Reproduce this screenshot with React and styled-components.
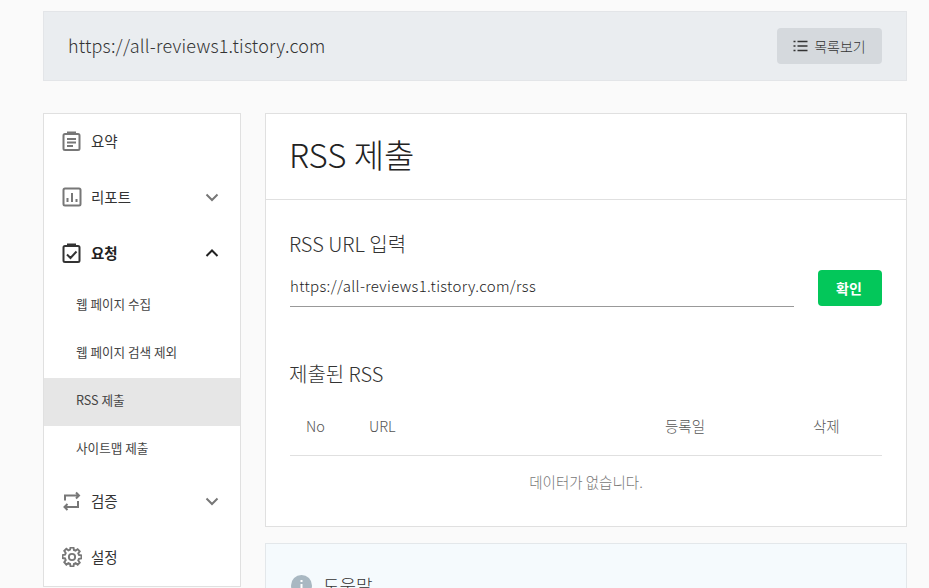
import React from "react";
import styled, { createGlobalStyle } from "styled-components";

const GlobalStyle = createGlobalStyle`
  html, body {
    margin: 0;
    height: 100%;
    overflow: hidden;
    background-color: #fafafa;
  }
  body {
    font-family: "Noto Sans CJK KR", "Noto Sans", sans-serif;
    color: #222;
  }
  * {
    box-sizing: border-box;
  }
`;

const Page = styled.div`
  width: 864px;
  margin-left: 43px;
  padding-top: 11px;
`;
const SiteBar = styled.div`
  display: flex;
  align-items: center;
  justify-content: space-between;
  height: 70px;
  padding: 0 24px;
  background-color: #eaedf0;
  border: 1px solid #e3e5e8;
`;
const SiteUrl = styled.div`
  font-size: 18px;
  font-weight: 300;
  color: #333;
  letter-spacing: 0.2px;
  margin-bottom: 3px;
`;
const ListButton = styled.button`
  display: flex;
  align-items: center;
  justify-content: center;
  gap: 6px;
  width: 105px;
  height: 36px;
  padding: 0 0 1px;
  background-color: #d5d9dd;
  border: none;
  border-radius: 4px;
  color: #333;
  font-family: inherit;
  font-size: 14px;
  font-weight: 300;
`;
const Columns = styled.div`
  display: flex;
  align-items: flex-start;
  gap: 24px;
  margin-top: 32px;
`;
const Sidebar = styled.nav`
  flex: none;
  width: 198px;
  background-color: #fff;
  border: 1px solid #e0e0e0;
`;
const MenuRow = styled.div`
  display: flex;
  align-items: center;
  height: 56px;
  padding: 0 21px 2px 18px;
  font-size: 14.5px;
  font-weight: ${(props) => (props.$active ? 700 : 400)};
  color: ${(props) => (props.$active ? "#222" : "#333")};
`;
const MenuIcon = styled.svg`
  flex: none;
  width: 20px;
  height: 20px;
  margin-right: 9px;
  fill: none;
  stroke: ${(props) => (props.$active ? "#333" : "#777")};
  stroke-width: ${(props) => props.$stroke || 2};
`;
const MenuLabel = styled.span`
  flex: 1;
  margin-bottom: 2px;
`;
const Chevron = styled.svg`
  flex: none;
  width: 14px;
  height: 14px;
  fill: none;
  stroke: ${(props) => (props.$active ? "#222" : "#777")};
  stroke-width: 2;
`;
const SubRow = styled.div`
  display: flex;
  align-items: center;
  height: 48px;
  padding: 0 0 5px 32px;
  font-size: 12.6px;
  font-weight: 400;
  color: #444;
  background-color: ${(props) => (props.$selected ? "#e6e6e6" : "transparent")};
`;
const Content = styled.div`
  flex: 1;
  display: flex;
  flex-direction: column;
  gap: 16px;
`;
const Card = styled.section`
  background-color: #fff;
  border: 1px solid #e0e0e0;
`;
const CardHeader = styled.div`
  display: flex;
  align-items: center;
  height: 86px;
  padding: 0 23px 6px;
  border-bottom: 1px solid #e0e0e0;
`;
const Title = styled.h1`
  margin: 0;
  font-size: 33px;
  font-weight: 300;
  color: #222;
`;
const CardBody = styled.div`
  padding: 29px 24px 0;
`;
const SectionTitle = styled.h2`
  margin: 0 0 0 -1px;
  height: 30px;
  line-height: 30px;
  font-size: 20px;
  font-weight: 300;
  color: #333;
`;
const InputRow = styled.div`
  display: flex;
  align-items: flex-end;
  gap: 24px;
  margin: 11px 0 52px;
`;
const UrlInput = styled.input`
  flex: 1;
  height: 37px;
  padding: 0 0 6px;
  background: transparent;
  border: none;
  border-bottom: 1px solid #999;
  border-radius: 0;
  outline: none;
  font-family: inherit;
  font-size: 15px;
  font-weight: 300;
  color: #222;
  letter-spacing: 0.33px;
`;
const ConfirmButton = styled.button`
  flex: none;
  width: 64px;
  height: 36px;
  margin-bottom: 1px;
  padding: 0 2px 0 0;
  background-color: #03c75a;
  border: none;
  border-radius: 4px;
  color: #fff;
  font-family: inherit;
  font-size: 14px;
  font-weight: 700;
`;
const Table = styled.div`
  margin-top: 9px;
`;
const TableHead = styled.div`
  display: grid;
  grid-template-columns: 63px 296px 148px 1fr;
  align-items: center;
  height: 58px;
  padding: 0 0 2px 16px;
  border-bottom: 1px solid #e0e0e0;
  font-size: 14.5px;
  font-weight: 300;
  color: #555;
`;
const EmptyRow = styled.div`
  display: flex;
  align-items: center;
  justify-content: center;
  height: 50px;
  margin-bottom: 20px;
  font-size: 14.5px;
  font-weight: 300;
  color: #777;
`;
const HelpCard = styled.section`
  display: flex;
  align-items: center;
  gap: 11px;
  height: 120px;
  padding: 0 24px 36px 25px;
  background-color: #f5fafd;
  border: 1px solid #e3e7ea;
`;
const HelpTitle = styled.h2`
  margin: 0;
  font-size: 18px;
  font-weight: 300;
  color: #333;
`;

const ChevronIcon = ({ up, active }) => (
  <Chevron viewBox="0 0 14 14" $active={active}>
    <path d={up ? "M1.5 10 7 4.5 12.5 10" : "M1.5 4.5 7 10 12.5 4.5"} />
  </Chevron>
);

const App = () => (
  <Page>
    <GlobalStyle />
    <SiteBar>
      <SiteUrl>https://all-reviews1.tistory.com</SiteUrl>
      <ListButton>
        <svg width="15" height="12" viewBox="0 0 15 12" fill="none" stroke="#333" strokeWidth="1.4">
          <path d="M0.5 1.5h2M0.5 6h2M0.5 10.5h2M4.5 1.5H14.5M4.5 6H14.5M4.5 10.5H14.5" />
        </svg>
        목록보기
      </ListButton>
    </SiteBar>
    <Columns>
      <Sidebar>
        <MenuRow>
          <MenuIcon viewBox="0 0 20 20">
            <rect x="1.5" y="3" width="16" height="16" rx="1.5" />
            <path d="M6 3V1.5h7V3M5 8h9M5 11.5h9M5 15h6" />
          </MenuIcon>
          <MenuLabel>요약</MenuLabel>
        </MenuRow>
        <MenuRow>
          <MenuIcon viewBox="0 0 20 20">
            <rect x="1.5" y="1.5" width="17" height="17" rx="1.5" />
            <path d="M5.5 15v-4M10 15V6M14.5 15v-3" />
          </MenuIcon>
          <MenuLabel>리포트</MenuLabel>
          <ChevronIcon />
        </MenuRow>
        <MenuRow $active>
          <MenuIcon viewBox="0 0 20 20" $active>
            <rect x="1.5" y="3" width="16" height="16" rx="1.5" />
            <path d="M6 3V1.5h7V3M5 11.5 8.5 15l6-6.5" />
          </MenuIcon>
          <MenuLabel>요청</MenuLabel>
          <ChevronIcon up active />
        </MenuRow>
        <SubRow>웹 페이지 수집</SubRow>
        <SubRow>웹 페이지 검색 제외</SubRow>
        <SubRow $selected>RSS 제출</SubRow>
        <SubRow>사이트맵 제출</SubRow>
        <MenuRow>
          <MenuIcon viewBox="0 0 20 20">
            <path d="M3 9.5V4.5H17M14 1.5l3 3-3 3M16 10v6H2.5M5.5 13l-3 3 3 3" />
          </MenuIcon>
          <MenuLabel>검증</MenuLabel>
          <ChevronIcon />
        </MenuRow>
        <MenuRow>
          <MenuIcon viewBox="0.5 1.5 23 23" $stroke={2.2}>
            <path d="M10.3 2h3.4l.5 2.9 1.9.8 2.4-1.7 2.4 2.4-1.7 2.4.8 1.9 2.9.5v3.4l-2.9.5-.8 1.9 1.7 2.4-2.4 2.4-2.4-1.7-1.9.8-.5 2.9h-3.4l-.5-2.9-1.9-.8-2.4 1.7L3.1 19l1.7-2.4-.8-1.9-2.9-.5v-3.4l2.9-.5.8-1.9L3.1 6l2.4-2.4 2.4 1.7 1.9-.8z" />
            <circle cx="12" cy="13" r="3.6" />
          </MenuIcon>
          <MenuLabel>설정</MenuLabel>
        </MenuRow>
      </Sidebar>
      <Content>
        <Card>
          <CardHeader>
            <Title>RSS 제출</Title>
          </CardHeader>
          <CardBody>
            <SectionTitle>RSS URL 입력</SectionTitle>
            <InputRow>
              <UrlInput readOnly value="https://all-reviews1.tistory.com/rss" />
              <ConfirmButton>확인</ConfirmButton>
            </InputRow>
            <SectionTitle>제출된 RSS</SectionTitle>
            <Table>
              <TableHead>
                <span>No</span>
                <span>URL</span>
                <span>등록일</span>
                <span>삭제</span>
              </TableHead>
              <EmptyRow>데이터가 없습니다.</EmptyRow>
            </Table>
          </CardBody>
        </Card>
        <HelpCard>
          <svg width="21" height="21" viewBox="0 0 21 21">
            <circle cx="10.5" cy="10.5" r="10.5" fill="#a9b8c2" />
            <path d="M10.5 9v6.5M10.5 5v2" stroke="#fff" strokeWidth="2" />
          </svg>
          <HelpTitle>도움말</HelpTitle>
        </HelpCard>
      </Content>
    </Columns>
  </Page>
);

export default App;
